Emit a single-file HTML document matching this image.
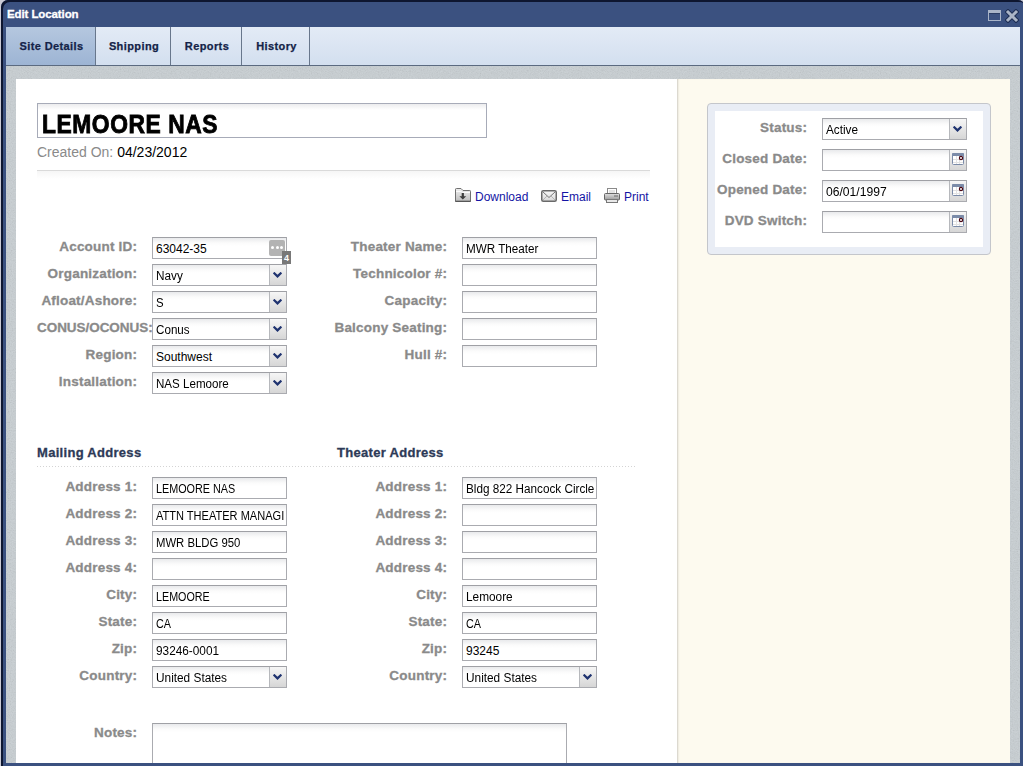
<!DOCTYPE html>
<html><head><meta charset="utf-8"><title>Edit Location</title>
<style>
html,body{margin:0;padding:0;width:1023px;height:766px;overflow:hidden;background:#cacad4;font-family:"Liberation Sans",sans-serif;}
#frame{position:absolute;left:0;top:0;width:1023px;height:766px;overflow:hidden}
#outer{left:1px;top:0;width:1024px;height:770px;background:#3b5180;border-radius:7px 7px 0 0;box-shadow:inset 2px 2px 0 0 #0e1630}
#frame>*{position:absolute}
#title{left:7px;top:8px;font:bold 11.5px "Liberation Sans",sans-serif;color:#fff;letter-spacing:-0.1px;-webkit-text-stroke:0.3px #fff}
#maxi{left:988px;top:10px;width:11px;height:7px;border:1px solid #a9b4c8;border-top-width:3px;box-shadow:inset 0 1px 0 #2a3c64}
#closex{left:1004.5px;top:8.5px}
#tabs{left:6px;top:27px;width:1014px;height:38px;background:linear-gradient(#e3ebf6,#d3dfef);border-bottom:1px solid #5b6a80}
.tab{position:absolute;top:0;height:38px;text-align:center;box-sizing:border-box;padding-left:2px;font:bold 11px "Liberation Sans",sans-serif;line-height:38px;color:#142348;border-right:1px solid #68778c;letter-spacing:0.4px;-webkit-text-stroke:0.25px #142348}
.tab.act{background:linear-gradient(#b5c7df,#9db4d4)}
#strip{left:6px;top:66px;width:1014px;height:697px;background:#c8cfd3}
#noise{left:6px;top:66px;width:1014px;height:697px;opacity:0.3}
#wpanel{left:16px;top:79px;width:661px;height:684px;background:#fff}
#cpanel{left:677px;top:79px;width:333px;height:684px;background:#fdfaef;box-shadow:inset 2px 0 2px -1px rgba(0,0,0,0.18)}
.lbl{position:absolute;font:bold 13.5px "Liberation Sans",sans-serif;color:#8a8a8a;line-height:21px;margin-top:-1px;white-space:nowrap;letter-spacing:0.2px;margin-right:-1.2px;-webkit-text-stroke:0.3px #8a8a8a}
.inp{position:absolute;border:1px solid #aaabb0;border-top-color:#9fa0a5;background:linear-gradient(#e9eaec,#fbfbfb 5px,#fff 8px);font:12px "Liberation Sans",sans-serif;color:#000}
.val{position:absolute;left:3px;top:1px;line-height:20px;white-space:nowrap;transform-origin:0 0}
.sbtn{position:absolute;right:0;top:0;width:16px;height:20px;border-left:1px solid #b6b8bc;background:linear-gradient(#f6f6f6,#d6d6d6)}
.sbtn svg{position:absolute;left:3px;top:7px}
.sbtn svg.cal{position:absolute;left:2px;top:3px}
.dots{position:absolute;left:116px;top:2px;width:16px;height:16px;background:#b3b3b3;border-radius:2px}
.dots i{position:absolute;top:6px;width:3px;height:3px;border-radius:50%;background:#fff}
.dots i:nth-child(1){left:2px}.dots i:nth-child(2){left:6.5px}.dots i:nth-child(3){left:11px}
#badge{left:282px;top:251px;width:9px;height:13px;background:#787878;color:#fff;font:bold 9px "Liberation Sans",sans-serif;line-height:14px;text-align:center}
#nameinp{left:37px;top:103px;width:448px;height:33px;border:1px solid #a7abb8;background:linear-gradient(#ececee,#fff 6px)}
#nameinp span{position:absolute;left:4px;top:4px;font:bold 24px "Liberation Sans",sans-serif;line-height:30px;color:#000;letter-spacing:0.6px;transform:scale(0.95,1.1);-webkit-text-stroke:0.8px #000;transform-origin:0 0;white-space:nowrap}
#created{left:37px;top:144px;font:14px "Liberation Sans",sans-serif;color:#000;letter-spacing:0px;line-height:16px}
#created .g{color:#8a8a8a}
#sep{left:37px;top:170px;width:613px;height:1px;background:#dadada}
#sepfade{left:37px;top:171px;width:613px;height:8px;background:linear-gradient(#f6f6f6,#fff)}
.link{position:absolute;height:18px;font:12px "Liberation Sans",sans-serif;color:#1414a4}
.link span{position:absolute;top:4px;line-height:15px;white-space:nowrap}
.sec{top:445px;font:bold 13px "Liberation Sans",sans-serif;color:#2d3a57;letter-spacing:0.3px;line-height:16px;-webkit-text-stroke:0.3px #2d3a57}
#dots{left:37px;top:466px;width:600px;height:1px;background:repeating-linear-gradient(90deg,#d4d4d4 0 1px,transparent 1px 3px)}
#notes{left:152px;top:723px;width:413px;height:60px;border:1px solid #aaabb0;border-top-color:#9fa0a5;background:linear-gradient(#e9eaec,#fbfbfb 5px,#fff 8px)}
#sbox{left:707px;top:103px;width:282px;height:150px;border:1px solid #c4c6cb;border-radius:4px;background:#e9edf5}
#sinner{position:absolute;left:7px;top:7px;width:268px;height:136px;background:#fff}
#bottomb{left:3px;top:763px;width:1020px;height:3px;background:#3b5180}

</style></head><body>
<div id="frame">
<div id="outer"></div>
<div id="title">Edit Location</div>
<div id="maxi"></div>
<svg id="closex" width="14" height="14" viewBox="0 0 14 14"><path d="M3 3 L11 11 M11 3 L3 11" stroke="#1d2d52" stroke-width="5" stroke-linecap="square"/><path d="M3 3 L11 11 M11 3 L3 11" stroke="#aab4c6" stroke-width="3" stroke-linecap="square"/></svg>
<div id="tabs">
 <div class="tab act" style="left:0;width:90px">Site Details</div>
 <div class="tab" style="left:90px;width:75px">Shipping</div>
 <div class="tab" style="left:165px;width:71px">Reports</div>
 <div class="tab" style="left:236px;width:68px">History</div>
</div>
<div id="strip"></div>
<svg id="noise" width="1014" height="697"><filter id="nz"><feTurbulence type="fractalNoise" baseFrequency="0.9" numOctaves="2" seed="3"/><feColorMatrix type="saturate" values="0"/></filter><rect width="1014" height="697" filter="url(#nz)"/></svg>
<div id="wpanel"></div>
<div id="cpanel"></div>

<div id="nameinp"><span>LEMOORE NAS</span></div>
<div id="created"><span class="g">Created On:</span> 04/23/2012</div>
<div id="sep"></div><div id="sepfade"></div>
<div class="link" style="left:455px;top:186px">
<svg width="16" height="14" viewBox="0 0 16 14" style="position:absolute;left:0;top:2px"><defs><linearGradient id="fg" x1="0" y1="0" x2="0" y2="1"><stop offset="0" stop-color="#f0f0f0"/><stop offset="1" stop-color="#bdbdbd"/></linearGradient></defs>
<path d="M0.5 13.5 V1.2 Q0.5 0.5 1.5 0.5 H6 L8 2.5 H14.8 Q15.5 2.5 15.5 3.3 V13.5 Z" fill="url(#fg)" stroke="#707070" stroke-width="1"/>
<path d="M1 3.5 H6 L7.5 4.5 H15" fill="none" stroke="#fafafa" stroke-width="1"/>
<path d="M0.5 13.3 H15.5" stroke="#555" stroke-width="1.2"/>
<path d="M6.7 5 H8.9 V8.3 H11.2 L7.8 11.6 L4.4 8.3 H6.7 Z" fill="#3c3c3c"/></svg>
<span style="left:20px">Download</span></div>
<div class="link" style="left:541px;top:186px">
<svg width="16" height="12" viewBox="0 0 16 12" style="position:absolute;left:0;top:4px"><defs><linearGradient id="eg" x1="0" y1="0" x2="0" y2="1"><stop offset="0" stop-color="#f8f8f8"/><stop offset="1" stop-color="#d8d8d8"/></linearGradient></defs>
<rect x="0.75" y="0.75" width="14.5" height="10.5" rx="1.5" fill="url(#eg)" stroke="#6a6a6a" stroke-width="1.5"/>
<path d="M2 2 L8 7.5 L14 2" fill="none" stroke="#777" stroke-width="1"/><path d="M2 10 L6 6 M14 10 L10 6" fill="none" stroke="#aaa" stroke-width="0.8"/></svg>
<span style="left:20px">Email</span></div>
<div class="link" style="left:604px;top:186px">
<svg width="16" height="15" viewBox="0 0 16 15" style="position:absolute;left:0;top:2px"><defs><linearGradient id="pg" x1="0" y1="0" x2="0" y2="1"><stop offset="0" stop-color="#e0e0e0"/><stop offset="0.5" stop-color="#bdbdbd"/><stop offset="1" stop-color="#9a9a9a"/></linearGradient></defs>
<rect x="3.5" y="0.5" width="9" height="6" fill="#fff" stroke="#8a8a8a" stroke-width="1"/><rect x="5" y="2" width="6" height="3" fill="#e4e4e4"/>
<rect x="0.5" y="5.5" width="15" height="6.5" rx="1" fill="url(#pg)" stroke="#666" stroke-width="1"/>
<rect x="2.5" y="11.5" width="11" height="3" fill="#e8e8e8" stroke="#777" stroke-width="1"/>
<circle cx="11" cy="8" r="0.75" fill="#505050"/><circle cx="13" cy="8" r="0.75" fill="#505050"/></svg>
<span style="left:20px">Print</span></div>
<div class="lbl" style="top:237px;right:887px;">Account ID:</div>
<div class="inp" style="left:152px;top:237px;width:133px;height:20px"><span class="val" style="transform:scaleX(1.0)">63042-35</span>
<div class="dots"><i></i><i></i><i></i></div>
</div>
<div class="lbl" style="top:264px;right:887px;">Organization:</div>
<div class="inp" style="left:152px;top:264px;width:133px;height:20px"><span class="val" style="transform:scaleX(0.98)">Navy</span>
<div class="sbtn"><svg width="9" height="6" viewBox="0 0 9 6"><path d="M0.6 0.6 L4.5 4.4 L8.4 0.6" fill="none" stroke="#1f3370" stroke-width="2.2"/></svg></div>
</div>
<div class="lbl" style="top:291px;right:887px;">Afloat/Ashore:</div>
<div class="inp" style="left:152px;top:291px;width:133px;height:20px"><span class="val" style="transform:scaleX(0.95)">S</span>
<div class="sbtn"><svg width="9" height="6" viewBox="0 0 9 6"><path d="M0.6 0.6 L4.5 4.4 L8.4 0.6" fill="none" stroke="#1f3370" stroke-width="2.2"/></svg></div>
</div>
<div class="lbl" style="top:318px;left:37px;letter-spacing:-0.05px">CONUS/OCONUS:</div>
<div class="inp" style="left:152px;top:318px;width:133px;height:20px"><span class="val" style="transform:scaleX(0.97)">Conus</span>
<div class="sbtn"><svg width="9" height="6" viewBox="0 0 9 6"><path d="M0.6 0.6 L4.5 4.4 L8.4 0.6" fill="none" stroke="#1f3370" stroke-width="2.2"/></svg></div>
</div>
<div class="lbl" style="top:345px;right:887px;">Region:</div>
<div class="inp" style="left:152px;top:345px;width:133px;height:20px"><span class="val" style="transform:scaleX(1.0)">Southwest</span>
<div class="sbtn"><svg width="9" height="6" viewBox="0 0 9 6"><path d="M0.6 0.6 L4.5 4.4 L8.4 0.6" fill="none" stroke="#1f3370" stroke-width="2.2"/></svg></div>
</div>
<div class="lbl" style="top:372px;right:887px;">Installation:</div>
<div class="inp" style="left:152px;top:372px;width:133px;height:20px"><span class="val" style="transform:scaleX(0.966)">NAS Lemoore</span>
<div class="sbtn"><svg width="9" height="6" viewBox="0 0 9 6"><path d="M0.6 0.6 L4.5 4.4 L8.4 0.6" fill="none" stroke="#1f3370" stroke-width="2.2"/></svg></div>
</div>
<div id="badge">4</div>
<div class="lbl" style="top:237px;right:577px;">Theater Name:</div>
<div class="inp" style="left:462px;top:237px;width:133px;height:20px"><span class="val" style="transform:scaleX(0.973)">MWR Theater</span>
</div>
<div class="lbl" style="top:264px;right:577px;">Technicolor #:</div>
<div class="inp" style="left:462px;top:264px;width:133px;height:20px"><span class="val" style="transform:scaleX(1.0)"></span>
</div>
<div class="lbl" style="top:291px;right:577px;">Capacity:</div>
<div class="inp" style="left:462px;top:291px;width:133px;height:20px"><span class="val" style="transform:scaleX(1.0)"></span>
</div>
<div class="lbl" style="top:318px;right:577px;">Balcony Seating:</div>
<div class="inp" style="left:462px;top:318px;width:133px;height:20px"><span class="val" style="transform:scaleX(1.0)"></span>
</div>
<div class="lbl" style="top:345px;right:577px;">Hull #:</div>
<div class="inp" style="left:462px;top:345px;width:133px;height:20px"><span class="val" style="transform:scaleX(1.0)"></span>
</div>
<div class="sec" style="left:37px">Mailing Address</div><div class="sec" style="left:337px">Theater Address</div><div id="dots"></div>
<div class="lbl" style="top:477px;right:887px;">Address 1:</div>
<div class="inp" style="left:152px;top:477px;width:133px;height:20px"><span class="val" style="transform:scaleX(0.9)">LEMOORE NAS</span>
</div>
<div class="lbl" style="top:477px;right:577px;">Address 1:</div>
<div class="inp" style="left:462px;top:477px;width:133px;height:20px"><span class="val" style="transform:scaleX(0.977)">Bldg 822 Hancock Circle</span>
</div>
<div class="lbl" style="top:504px;right:887px;">Address 2:</div>
<div class="inp" style="left:152px;top:504px;width:133px;height:20px"><span class="val" style="transform:scaleX(0.92)">ATTN THEATER MANAGI</span>
</div>
<div class="lbl" style="top:504px;right:577px;">Address 2:</div>
<div class="inp" style="left:462px;top:504px;width:133px;height:20px"><span class="val" style="transform:scaleX(1.0)"></span>
</div>
<div class="lbl" style="top:531px;right:887px;">Address 3:</div>
<div class="inp" style="left:152px;top:531px;width:133px;height:20px"><span class="val" style="transform:scaleX(0.943)">MWR BLDG 950</span>
</div>
<div class="lbl" style="top:531px;right:577px;">Address 3:</div>
<div class="inp" style="left:462px;top:531px;width:133px;height:20px"><span class="val" style="transform:scaleX(1.0)"></span>
</div>
<div class="lbl" style="top:558px;right:887px;">Address 4:</div>
<div class="inp" style="left:152px;top:558px;width:133px;height:20px"><span class="val" style="transform:scaleX(1.0)"></span>
</div>
<div class="lbl" style="top:558px;right:577px;">Address 4:</div>
<div class="inp" style="left:462px;top:558px;width:133px;height:20px"><span class="val" style="transform:scaleX(1.0)"></span>
</div>
<div class="lbl" style="top:585px;right:887px;">City:</div>
<div class="inp" style="left:152px;top:585px;width:133px;height:20px"><span class="val" style="transform:scaleX(0.895)">LEMOORE</span>
</div>
<div class="lbl" style="top:585px;right:577px;">City:</div>
<div class="inp" style="left:462px;top:585px;width:133px;height:20px"><span class="val" style="transform:scaleX(0.985)">Lemoore</span>
</div>
<div class="lbl" style="top:612px;right:887px;">State:</div>
<div class="inp" style="left:152px;top:612px;width:133px;height:20px"><span class="val" style="transform:scaleX(0.9)">CA</span>
</div>
<div class="lbl" style="top:612px;right:577px;">State:</div>
<div class="inp" style="left:462px;top:612px;width:133px;height:20px"><span class="val" style="transform:scaleX(0.9)">CA</span>
</div>
<div class="lbl" style="top:639px;right:887px;">Zip:</div>
<div class="inp" style="left:152px;top:639px;width:133px;height:20px"><span class="val" style="transform:scaleX(0.984)">93246-0001</span>
</div>
<div class="lbl" style="top:639px;right:577px;">Zip:</div>
<div class="inp" style="left:462px;top:639px;width:133px;height:20px"><span class="val" style="transform:scaleX(1.0)">93245</span>
</div>
<div class="lbl" style="top:666px;right:887px;">Country:</div>
<div class="inp" style="left:152px;top:666px;width:133px;height:20px"><span class="val" style="transform:scaleX(0.986)">United States</span>
<div class="sbtn"><svg width="9" height="6" viewBox="0 0 9 6"><path d="M0.6 0.6 L4.5 4.4 L8.4 0.6" fill="none" stroke="#1f3370" stroke-width="2.2"/></svg></div>
</div>
<div class="lbl" style="top:666px;right:577px;">Country:</div>
<div class="inp" style="left:462px;top:666px;width:133px;height:20px"><span class="val" style="transform:scaleX(0.986)">United States</span>
<div class="sbtn"><svg width="9" height="6" viewBox="0 0 9 6"><path d="M0.6 0.6 L4.5 4.4 L8.4 0.6" fill="none" stroke="#1f3370" stroke-width="2.2"/></svg></div>
</div>
<div class="lbl" style="top:723px;right:887px;">Notes:</div>
<div id="notes"></div>
<div id="bottomb"></div>
<div id="sbox"><div id="sinner"></div></div>
<div class="lbl" style="top:118px;right:217px;">Status:</div>
<div class="inp" style="left:822px;top:118px;width:143px;height:20px"><span class="val" style="transform:scaleX(0.98)">Active</span>
<div class="sbtn"><svg width="9" height="6" viewBox="0 0 9 6"><path d="M0.6 0.6 L4.5 4.4 L8.4 0.6" fill="none" stroke="#1f3370" stroke-width="2.2"/></svg></div>
</div>
<div class="lbl" style="top:149px;right:217px;">Closed Date:</div>
<div class="inp" style="left:822px;top:149px;width:143px;height:20px"><span class="val" style="transform:scaleX(1.0)"></span>
<div class="sbtn"><svg class="cal" width="12" height="12" viewBox="0 0 12 12"><rect x="0.5" y="0.5" width="11" height="11" rx="1" fill="#fff" stroke="#7b8ba8"/><rect x="0" y="0" width="12" height="3" rx="1" fill="#7b8ba8"/><path d="M4.5 3V11M7.5 3V11M1 6.5H11M1 9.5H11" stroke="#e2e2e2"/><circle cx="9" cy="5" r="1.6" fill="#fff" stroke="#4a0612" stroke-width="1.2"/></svg></div>
</div>
<div class="lbl" style="top:180px;right:217px;">Opened Date:</div>
<div class="inp" style="left:822px;top:180px;width:143px;height:20px"><span class="val" style="transform:scaleX(1.01)">06/01/1997</span>
<div class="sbtn"><svg class="cal" width="12" height="12" viewBox="0 0 12 12"><rect x="0.5" y="0.5" width="11" height="11" rx="1" fill="#fff" stroke="#7b8ba8"/><rect x="0" y="0" width="12" height="3" rx="1" fill="#7b8ba8"/><path d="M4.5 3V11M7.5 3V11M1 6.5H11M1 9.5H11" stroke="#e2e2e2"/><circle cx="9" cy="5" r="1.6" fill="#fff" stroke="#4a0612" stroke-width="1.2"/></svg></div>
</div>
<div class="lbl" style="top:211px;right:217px;">DVD Switch:</div>
<div class="inp" style="left:822px;top:211px;width:143px;height:20px"><span class="val" style="transform:scaleX(1.0)"></span>
<div class="sbtn"><svg class="cal" width="12" height="12" viewBox="0 0 12 12"><rect x="0.5" y="0.5" width="11" height="11" rx="1" fill="#fff" stroke="#7b8ba8"/><rect x="0" y="0" width="12" height="3" rx="1" fill="#7b8ba8"/><path d="M4.5 3V11M7.5 3V11M1 6.5H11M1 9.5H11" stroke="#e2e2e2"/><circle cx="9" cy="5" r="1.6" fill="#fff" stroke="#4a0612" stroke-width="1.2"/></svg></div>
</div>
</div>
</body></html>
